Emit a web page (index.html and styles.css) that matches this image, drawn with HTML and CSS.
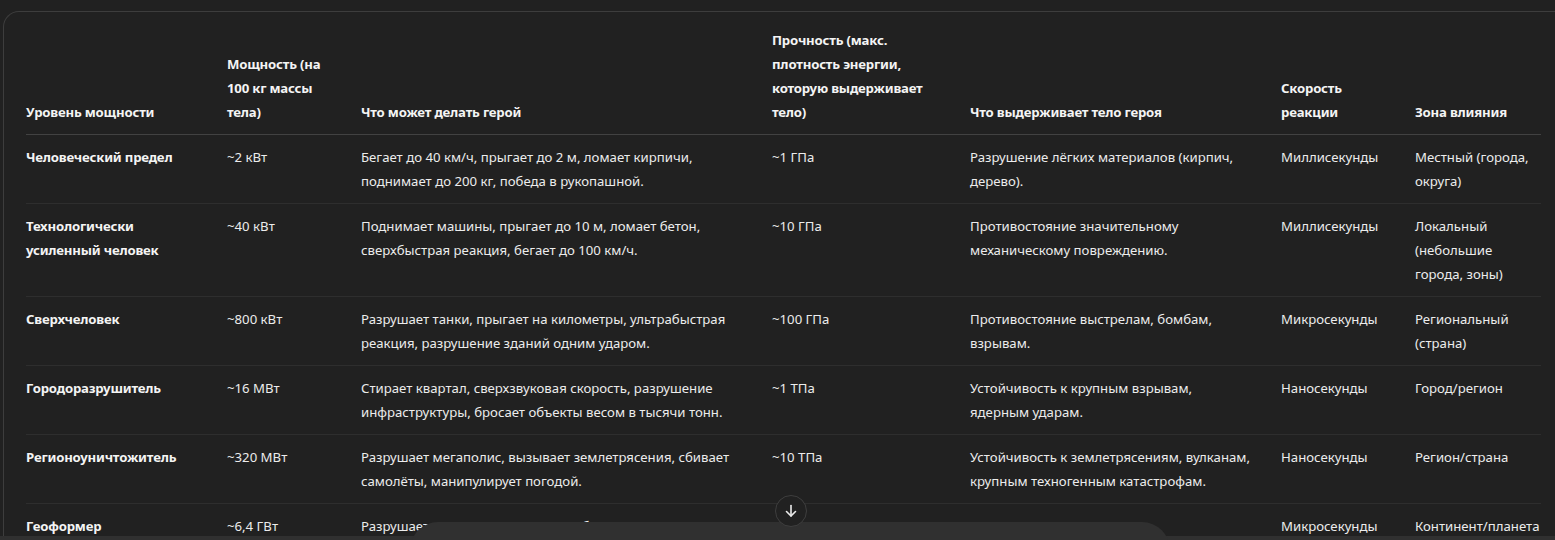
FILE: index.html
```html
<!DOCTYPE html>
<html lang="ru">
<head>
<meta charset="utf-8">
<title>Уровни мощности</title>
<link rel="stylesheet" href="styles.css">
</head>
<body>
<div class="page">
  <div class="card">
    <table class="power-table">
      <colgroup>
        <col class="c1"><col class="c2"><col class="c3"><col class="c4"><col class="c5"><col class="c6"><col class="c7">
      </colgroup>
      <thead>
        <tr>
          <th>Уровень мощности</th>
          <th>Мощность (на 100 кг массы тела)</th>
          <th>Что может делать герой</th>
          <th>Прочность (макс. плотность энергии, которую выдерживает тело)</th>
          <th>Что выдерживает тело героя</th>
          <th>Скорость реакции</th>
          <th>Зона влияния</th>
        </tr>
      </thead>
      <tbody>
        <tr>
          <td class="name">Человеческий предел</td>
          <td>~2 кВт</td>
          <td>Бегает до 40 км/ч, прыгает до 2 м, ломает кирпичи, поднимает до 200 кг, победа в рукопашной.</td>
          <td>~1 ГПа</td>
          <td>Разрушение лёгких материалов (кирпич, дерево).</td>
          <td>Миллисекунды</td>
          <td>Местный (города, округа)</td>
        </tr>
        <tr>
          <td class="name">Технологически усиленный человек</td>
          <td>~40 кВт</td>
          <td>Поднимает машины, прыгает до 10 м, ломает бетон, сверхбыстрая реакция, бегает до 100 км/ч.</td>
          <td>~10 ГПа</td>
          <td>Противостояние значительному механическому повреждению.</td>
          <td>Миллисекунды</td>
          <td>Локальный (небольшие города, зоны)</td>
        </tr>
        <tr>
          <td class="name">Сверхчеловек</td>
          <td>~800 кВт</td>
          <td>Разрушает танки, прыгает на километры, ультрабыстрая реакция, разрушение зданий одним ударом.</td>
          <td>~100 ГПа</td>
          <td>Противостояние выстрелам, бомбам, взрывам.</td>
          <td>Микросекунды</td>
          <td>Региональный (страна)</td>
        </tr>
        <tr>
          <td class="name">Городоразрушитель</td>
          <td>~16 МВт</td>
          <td>Стирает квартал, сверхзвуковая скорость, разрушение инфраструктуры, бросает объекты весом в тысячи тонн.</td>
          <td>~1 ТПа</td>
          <td>Устойчивость к крупным взрывам, ядерным ударам.</td>
          <td>Наносекунды</td>
          <td>Город/регион</td>
        </tr>
        <tr>
          <td class="name">Регионоуничтожитель</td>
          <td>~320 МВт</td>
          <td>Разрушает мегаполис, вызывает землетрясения, сбивает самолёты, манипулирует погодой.</td>
          <td>~10 ТПа</td>
          <td>Устойчивость к землетрясениям, вулканам, крупным техногенным катастрофам.</td>
          <td>Наносекунды</td>
          <td>Регион/страна</td>
        </tr>
        <tr>
          <td class="name">Геоформер</td>
          <td>~6,4 ГВт</td>
          <td>Разрушает континенты, меняет орбиты, создаёт кратеры размером с государства.</td>
          <td>~100 ТПа</td>
          <td>Защита от прямых ударов, катастрофических землетрясений.</td>
          <td>Микросекунды</td>
          <td>Континент/планета</td>
        </tr>
      </tbody>
    </table>
  </div>
</div>
<button class="scroll-down" type="button" aria-label="Прокрутить вниз">
  <svg width="16" height="16" viewBox="0 0 16 16" fill="none" stroke="currentColor" stroke-width="1.6" stroke-linecap="round" stroke-linejoin="round">
    <path d="M8 2.5v10.5"/>
    <path d="M3.5 8.5 8 13l4.5-4.5"/>
  </svg>
</button>
<div class="bottom-band"></div>
<div class="composer"></div>
</body>
</html>
```

FILE: styles.css
```css
html, body {
  margin: 0;
  padding: 0;
  height: 100%;
  overflow: hidden;
  background: #212121;
}

body {
  font-family: "Noto Sans", "Open Sans", sans-serif;
  font-size: 13.2px;
  line-height: 24px;
  color: #ececec;
}

.page {
  padding: 11px 0 0 3px;
}

.card {
  width: 1600px;
  border: 1px solid #3d3d3d;
  border-right: none;
  border-radius: 16px 0 0 0;
  padding: 6px 0 40px 22px;
  box-sizing: border-box;
}

.power-table {
  border-collapse: collapse;
  table-layout: fixed;
  width: 1515px;
}

.c1 { width: 201px; }
.c2 { width: 134px; }
.c3 { width: 411px; }
.c4 { width: 198px; }
.c5 { width: 311px; }
.c6 { width: 134px; }
.c7 { width: 126px; }

.power-table th,
.power-table td {
  padding: 10px 16px 10px 0;
  text-align: left;
  vertical-align: top;
}

.power-table th:nth-child(5),
.power-table td:nth-child(5) {
  padding-right: 29px;
}

.power-table th:last-child,
.power-table td:last-child {
  padding-right: 0;
}

.power-table th {
  vertical-align: bottom;
  font-weight: 700;
  letter-spacing: -0.2px;
  color: #f4f4f4;
  border-bottom: 1px solid #424242;
}

.power-table td {
  border-bottom: 1px solid #2e2e2e;
}

.power-table td.name {
  font-weight: 700;
  letter-spacing: -0.2px;
  color: #f4f4f4;
}

.scroll-down {
  position: fixed;
  left: 775px;
  top: 495px;
  width: 32px;
  height: 32px;
  border-radius: 50%;
  border: 1px solid #3f3f3f;
  background: #212121;
  color: #ececec;
  display: flex;
  align-items: center;
  justify-content: center;
  padding: 0;
  z-index: 3;
}

.bottom-band {
  position: fixed;
  left: 0;
  right: 0;
  top: 536px;
  height: 4px;
  background: #303030;
  z-index: 1;
}

.composer {
  position: fixed;
  left: 410px;
  width: 760px;
  top: 522px;
  height: 60px;
  border-radius: 28px;
  background: #303030;
  z-index: 2;
}
```
